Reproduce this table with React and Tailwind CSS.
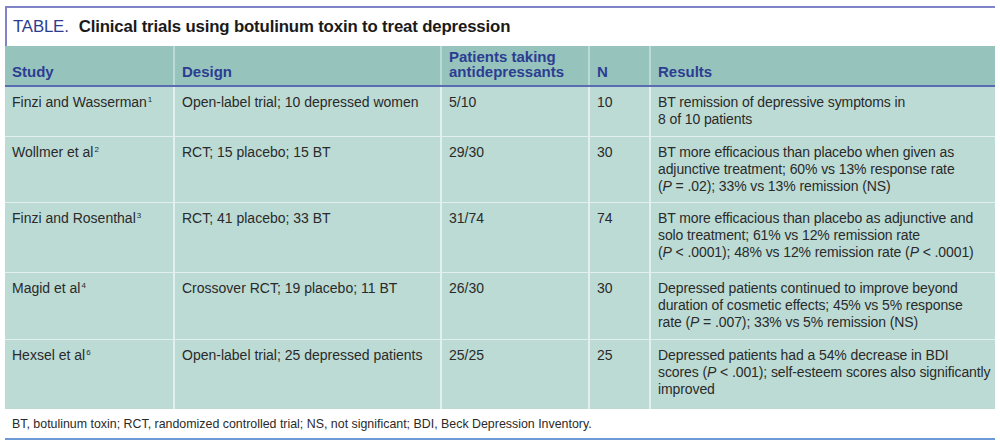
import React from "react";

const rows = [
  {
    h: "h-[50px]",
    study: ["Finzi and Wasserman", "1"],
    design: "Open-label trial; 10 depressed women",
    pat: "5/10",
    n: "10",
    results: [<>BT remission of depressive symptoms in</>, <>8 of 10 patients</>],
  },
  {
    h: "h-[66px]",
    study: ["Wollmer et al", "2"],
    design: "RCT; 15 placebo; 15 BT",
    pat: "29/30",
    n: "30",
    results: [
      <>BT more efficacious than placebo when given as</>,
      <>adjunctive treatment; 60% vs 13% response rate</>,
      <>(<i>P</i> = .02); 33% vs 13% remission (NS)</>,
    ],
  },
  {
    h: "h-[70px]",
    study: ["Finzi and Rosenthal", "3"],
    design: "RCT; 41 placebo; 33 BT",
    pat: "31/74",
    n: "74",
    results: [
      <>BT more efficacious than placebo as adjunctive and</>,
      <>solo treatment; 61% vs 12% remission rate</>,
      <>(<i>P</i> &lt; .0001); 48% vs 12% remission rate (<i>P</i> &lt; .0001)</>,
    ],
  },
  {
    h: "h-[67px]",
    study: ["Magid et al", "4"],
    design: "Crossover RCT; 19 placebo; 11 BT",
    pat: "26/30",
    n: "30",
    results: [
      <>Depressed patients continued to improve beyond</>,
      <>duration of cosmetic effects; 45% vs 5% response</>,
      <>rate (<i>P</i> = .007); 33% vs 5% remission (NS)</>,
    ],
  },
  {
    h: "h-[69px]",
    study: ["Hexsel et al", "6"],
    design: "Open-label trial; 25 depressed patients",
    pat: "25/25",
    n: "25",
    results: [
      <>Depressed patients had a 54% decrease in BDI</>,
      <>scores (<i>P</i> &lt; .001); self-esteem scores also significantly</>,
      <>improved</>,
    ],
  },
];

const cols = "grid grid-cols-[170px_267px_148px_61px_344px]";

export default function App() {
  return (
    <div className="w-[1000px] h-[447px] bg-white pt-[6px] px-[5px] font-['Liberation_Sans',Arial,sans-serif]">
      <div className="h-[40px] border-t-2 border-l-2 border-[#8083c8] flex items-center pl-[6px] text-[16.8px] tracking-[-0.15px]">
        <span className="text-[#2c3d91]">TABLE.</span>
        <span className="ml-[10px] font-bold text-[#1a1a1a]">Clinical trials using botulinum toxin to treat depression</span>
      </div>
      <div className={`${cols} h-[41px] bg-[#96c4bd] border-b-2 border-[#5a6cb2] text-[15px] font-bold text-[#2c3d91] leading-[15px]`}>
        <div className="border-r-2 border-[#bcdad4] px-[7px] flex items-end pb-[6px]">Study</div>
        <div className="border-r-2 border-[#bcdad4] px-[7px] flex items-end pb-[6px]">Design</div>
        <div className="border-r-2 border-[#bcdad4] px-[7px] flex items-end pb-[6px]">Patients taking<br />antidepressants</div>
        <div className="border-r-2 border-[#bcdad4] px-[7px] flex items-end pb-[6px]">N</div>
        <div className="px-[7px] flex items-end pb-[6px]">Results</div>
      </div>
      {rows.map((r, i) => (
        <div
          key={i}
          className={`${cols} ${r.h} bg-[#bcdbd5] text-[14px] leading-[17px] text-[#2a2a2a] ${i < rows.length - 1 ? "border-b border-[#e2efec]" : ""}`}
        >
          <div className="border-r-2 border-[#e2efec] px-[7px] pt-[7px] whitespace-nowrap">
            {r.study[0]}
            <span className="text-[8px] relative -top-[5px] ml-[1px]">{r.study[1]}</span>
          </div>
          <div className="border-r-2 border-[#e2efec] px-[7px] pt-[7px] whitespace-nowrap">{r.design}</div>
          <div className="border-r-2 border-[#e2efec] px-[7px] pt-[7px]">{r.pat}</div>
          <div className="border-r-2 border-[#e2efec] px-[7px] pt-[7px]">{r.n}</div>
          <div className="px-[7px] pt-[7px] whitespace-nowrap tracking-[-0.1px]">
            {r.results.map((l, j) => (
              <div key={j}>{l}</div>
            ))}
          </div>
        </div>
      ))}
      <div className="h-[31px] border-b-2 border-[#6c9ad4] flex items-center pl-[7px] pt-[2px] text-[12.4px] text-[#2a2a2a]">
        BT, botulinum toxin; RCT, randomized controlled trial; NS, not significant; BDI, Beck Depression Inventory.
      </div>
    </div>
  );
}
